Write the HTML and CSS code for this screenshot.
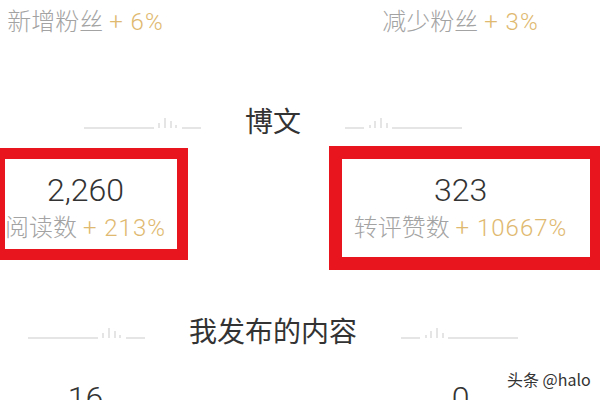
FILE: index.html
```html
<!DOCTYPE html>
<html lang="zh-CN">
<head>
  <meta charset="UTF-8">
  <title>数据概况</title>
  <link rel="stylesheet" href="styles.css">
</head>
<body>

  <div class="page">

    <!-- 粉丝 -->
    <div class="grid fans">
      <div class="label">新增粉丝 <span class="up">+ 6%</span></div>
      <div class="label">减少粉丝 <span class="up">+ 3%</span></div>
    </div>

    <!-- 博文 -->
    <div class="section-title first">
      <svg class="divider" width="118" height="14" viewBox="0 0 118 14">
        <g stroke="#dcdcdc" stroke-width="1.5">
          <line x1="0" y1="13" x2="70" y2="13"/>
          <line x1="75" y1="13" x2="75" y2="8"/>
          <line x1="81" y1="13" x2="81" y2="3"/>
          <line x1="87" y1="13" x2="87" y2="6"/>
          <line x1="92" y1="13" x2="92" y2="10"/>
          <line x1="98" y1="13" x2="117" y2="13"/>
        </g>
      </svg>
      <h2>博文</h2>
      <svg class="divider flip" width="118" height="14" viewBox="0 0 118 14">
        <g stroke="#dcdcdc" stroke-width="1.5">
          <line x1="0" y1="13" x2="70" y2="13"/>
          <line x1="75" y1="13" x2="75" y2="8"/>
          <line x1="81" y1="13" x2="81" y2="3"/>
          <line x1="87" y1="13" x2="87" y2="6"/>
          <line x1="92" y1="13" x2="92" y2="10"/>
          <line x1="98" y1="13" x2="117" y2="13"/>
        </g>
      </svg>
    </div>

    <div class="grid stats">
      <div class="stat">
        <div class="num">2,260</div>
        <div class="label">阅读数 <span class="up">+ 213%</span></div>
      </div>
      <div class="stat">
        <div class="num">323</div>
        <div class="label">转评赞数 <span class="up">+ 10667%</span></div>
      </div>
    </div>

    <!-- 我发布的内容 -->
    <div class="section-title second">
      <svg class="divider" width="118" height="14" viewBox="0 0 118 14">
        <g stroke="#dcdcdc" stroke-width="1.5">
          <line x1="0" y1="13" x2="70" y2="13"/>
          <line x1="75" y1="13" x2="75" y2="8"/>
          <line x1="81" y1="13" x2="81" y2="3"/>
          <line x1="87" y1="13" x2="87" y2="6"/>
          <line x1="92" y1="13" x2="92" y2="10"/>
          <line x1="98" y1="13" x2="117" y2="13"/>
        </g>
      </svg>
      <h2>我发布的内容</h2>
      <svg class="divider flip" width="118" height="14" viewBox="0 0 118 14">
        <g stroke="#dcdcdc" stroke-width="1.5">
          <line x1="0" y1="13" x2="70" y2="13"/>
          <line x1="75" y1="13" x2="75" y2="8"/>
          <line x1="81" y1="13" x2="81" y2="3"/>
          <line x1="87" y1="13" x2="87" y2="6"/>
          <line x1="92" y1="13" x2="92" y2="10"/>
          <line x1="98" y1="13" x2="117" y2="13"/>
        </g>
      </svg>
    </div>

    <div class="grid stats last">
      <div class="stat"><div class="num">16</div></div>
      <div class="stat"><div class="num">0</div></div>
    </div>
  </div>

  <!-- annotation boxes -->
  <div class="mark mark-left"></div>
  <div class="mark mark-right"></div>

  <div class="watermark">头条 @halo</div>

</body>
</html>
```

FILE: styles.css
```css
body {
  margin: 0;
  padding: 0;
  background: #fff;
  width: 600px;
  height: 400px;
  overflow: hidden;
  position: relative;
  font-family: "Helvetica Neue", Roboto, "Noto Sans CJK SC", sans-serif;
  color: #333;
}

.page {
  width: 750px;
  margin-left: -102px;
}

.grid {
  display: grid;
  grid-template-columns: 375px 375px;
  text-align: center;
}

.label {
  font-size: 24px;
  font-weight: 300;
  color: #a3a3a3;
  white-space: nowrap;
}

.up {
  color: #e0b970;
  letter-spacing: 1px;
}

.fans .label {
  line-height: 44px;
}

/* Section headers */
.section-title {
  display: flex;
  justify-content: center;
  align-items: center;
  gap: 43px;
  height: 40px;
}

.section-title.first {
  margin-top: 56px;
}

.section-title.second {
  margin-top: 64px;
}

.section-title h2 {
  margin: 0;
  font-size: 28px;
  font-weight: 400;
  color: #333;
}

.divider {
  display: block;
  margin-top: 4px;
}

.divider.flip {
  transform: scaleX(-1);
}

/* Stats */
.stats {
  margin-top: 30px;
}

.stats.last {
  margin-top: 28px;
}

.num {
  font-family: Roboto, "Helvetica Neue", sans-serif;
  font-size: 32px;
  font-weight: 300;
  line-height: 40px;
  color: #333;
}

.stat .label {
  line-height: 36px;
}

/* Red annotation rectangles */
.mark {
  position: absolute;
  border: 11px solid #e8151f;
}

.mark-left {
  left: -6px;
  top: 148px;
  width: 172px;
  height: 90px;
}

.mark-right {
  left: 329px;
  top: 146px;
  width: 248px;
  height: 98px;
  border-width: 13px;
}

.watermark {
  position: absolute;
  left: 507px;
  top: 368px;
  font-family: "Noto Sans CJK SC", sans-serif;
  font-size: 16px;
  line-height: 22px;
  color: #333;
  text-shadow: 0 0 2px #fff, 0 0 2px #fff;
}
```
